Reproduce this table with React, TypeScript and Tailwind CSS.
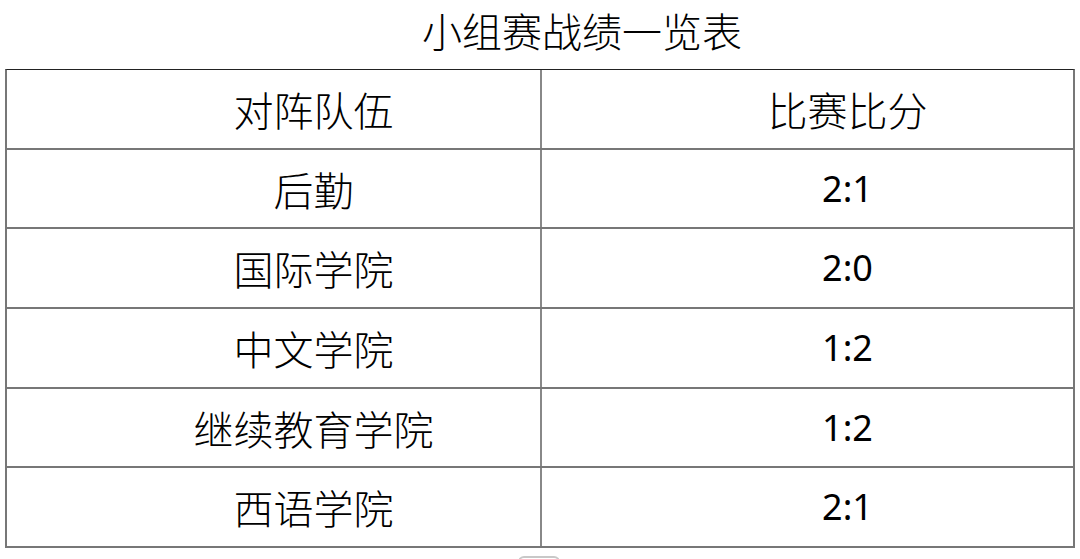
const rows = [
  { team: "后勤", score: "2:1" },
  { team: "国际学院", score: "2:0" },
  { team: "中文学院", score: "1:2" },
  { team: "继续教育学院", score: "1:2" },
  { team: "西语学院", score: "2:1" },
];

const cjk = "font-['Noto_Sans_CJK_SC',sans-serif] font-light";
const num = "font-['Noto_Sans','Open_Sans',sans-serif]";

function Row({ left, right, numeric }: { left: string; right: string; numeric?: boolean }) {
  return (
    <div className="grid grid-cols-[535px_1fr] h-[79.7px] border-b-2 border-[#777]">
      <div className="flex items-center justify-center pl-[80px] border-r-2 border-[#888]">
        <span className={`${cjk} text-[40px] leading-none text-black`}>{left}</span>
      </div>
      <div className="flex items-center justify-center pl-[80px]">
        <span className={`${numeric ? num + " text-[36px]" : cjk + " text-[40px]"} leading-none text-black`}>
          {right}
        </span>
      </div>
    </div>
  );
}

export default function App() {
  return (
    <div className="w-[1080px] h-[559px] overflow-hidden bg-white">
      {/* Title */}
      <div className="h-[69px] pt-[10px] pl-[84px] text-center">
        <h1 className={`${cjk} text-[40px] leading-[40px] text-black`}>小组赛战绩一览表</h1>
      </div>

      {/* Table */}
      <div className="ml-[5px] w-[1070px] border-t border-[#222] border-x-2 border-x-[#777]">
        <Row left="对阵队伍" right="比赛比分" />
        {rows.map((r) => (
          <Row key={r.team} left={r.team} right={r.score} numeric />
        ))}
      </div>

      {/* cut-off element below */}
      <div className="mt-[8px] ml-[518px] w-[42px] h-[20px] rounded-md border-2 border-[#c8c8c8]" />
    </div>
  );
}
